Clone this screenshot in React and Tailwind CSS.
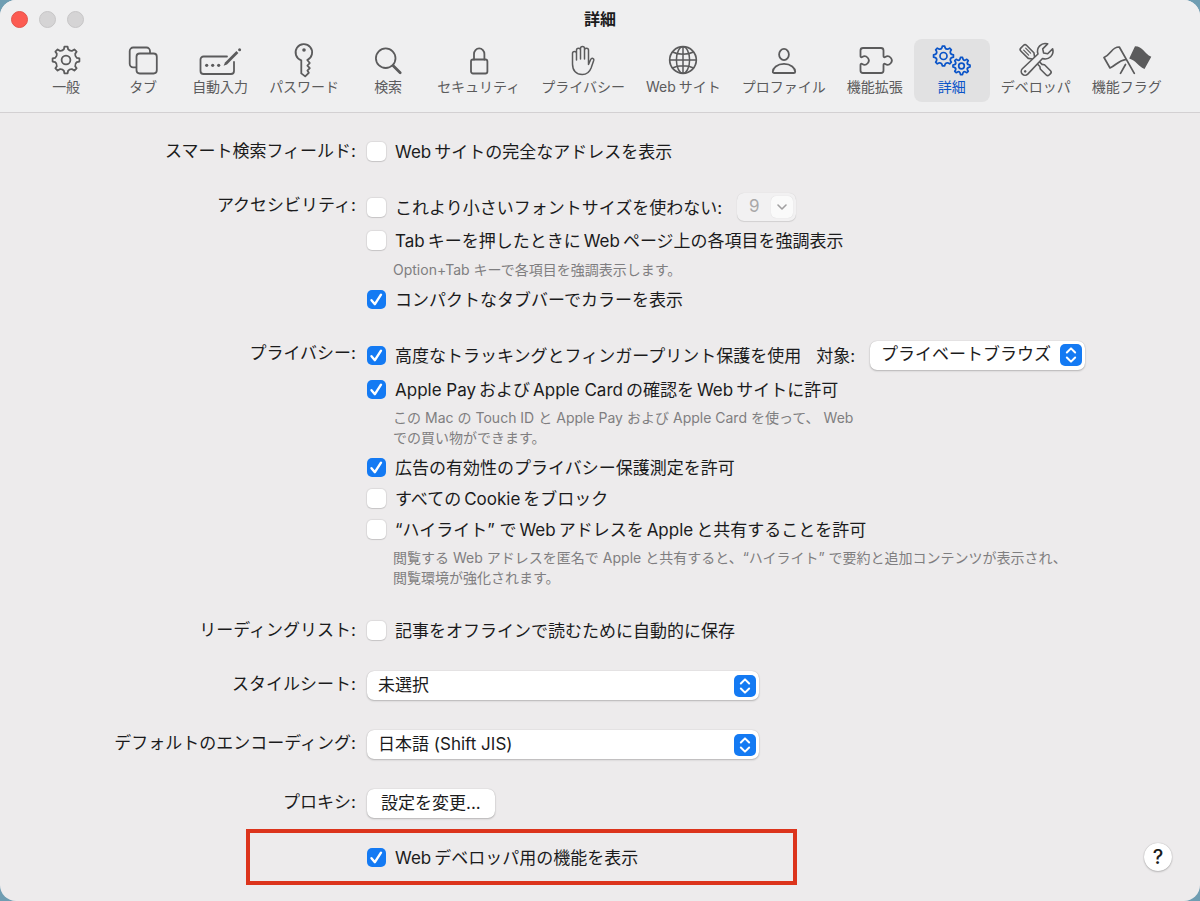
import { ChevronDown, ChevronsUpDown } from "lucide-react";

// outline of a cog with rounded teeth
const gearPath = (cx, cy, outer, inner, teeth = 8) => {
  const step = (Math.PI * 2) / teeth;
  const at = (r, a) => `${(cx + r * Math.sin(a)).toFixed(2)} ${(cy - r * Math.cos(a)).toFixed(2)}`;
  let d = "";
  for (let i = 0; i < teeth; i++) {
    const a = i * step;
    d += `${i ? "L" : "M"}${at(inner + 0.6, a - step * 0.24)} L${at(outer, a - step * 0.15)} L${at(outer, a + step * 0.15)} L${at(inner + 0.6, a + step * 0.24)} Q${at(inner - 1, a + step * 0.5)} ${at(inner + 0.6, a + step * 0.76)} `;
  }
  return d + "Z";
};

function Icon({ w = 32, stroke = 1.8, children }) {
  return (
    <svg width={w} height="32" viewBox={`0 0 ${w} 32`} fill="none" stroke="currentColor" strokeWidth={stroke} strokeLinecap="round" strokeLinejoin="round" className="overflow-visible" aria-hidden="true">
      {children}
    </svg>
  );
}

const tabs = [
  {
    label: "一般",
    icon: <Icon><path d={gearPath(16, 15, 13.5, 10.5)} /><circle cx="16" cy="15" r="4.4" /></Icon>,
  },
  {
    label: "タブ",
    icon: (
      <Icon>
        <path d="M9 22.3H6.2a3.5 3.5 0 0 1-3.5-3.5V6a3.5 3.5 0 0 1 3.5-3.5h13.3A3.5 3.5 0 0 1 23 6v2.2" />
        <rect x="9.5" y="8.5" width="20.3" height="20" rx="3.2" />
      </Icon>
    ),
  },
  {
    label: "自動入力",
    icon: (
      <Icon w={44}>
        <path d="M29 11.5H5.5a3 3 0 0 0-3 3V26a3 3 0 0 0 3 3H33a3 3 0 0 0 3-3V17" />
        <g fill="currentColor" stroke="none">
          <circle cx="8.7" cy="20.3" r="1.6" /><circle cx="14.7" cy="20.3" r="1.6" /><circle cx="20.7" cy="20.3" r="1.6" />
          <path d="M25.6 20.8l1.4-3.4L38.4 6l2 2L29 19.4z" />
          <circle cx="41.6" cy="4.8" r="1.5" />
        </g>
      </Icon>
    ),
  },
  {
    label: "パスワード",
    icon: (
      <Icon w={24}>
        <path d="M9.3 15.3A8.3 8.3 0 1 1 15.2 15l2.6 3-2.4 2.6 2.4 2.6-2.4 2.4 1.4 2.2-3.6 3.6-3.9-3z" />
        <circle cx="12" cy="5" r="1.8" fill="currentColor" stroke="none" />
      </Icon>
    ),
  },
  {
    label: "検索",
    icon: <Icon><circle cx="13.7" cy="13.2" r="9.8" /><path d="M21.2 20.7l7 7" strokeWidth="2.8" /></Icon>,
  },
  {
    label: "セキュリティ",
    icon: <Icon w={24}><rect x="4" y="14.5" width="16.4" height="14" rx="2" /><path d="M7 14.5V9a5.2 5.6 0 0 1 10.4 0v5.5" /></Icon>,
  },
  {
    label: "プライバシー",
    icon: (
      <Icon w={28} stroke={1.5}>
        <path d="M3.5 19V8.5a2 2 0 0 1 4 0V15V5.2a2 2 0 0 1 4 0V14V3.4a2 2 0 0 1 4 0V14V5.2a2 2 0 0 1 4 0V19.5l2.2-5c1-2 3.7-1.2 3 1l-2.6 7.5c-1.6 4.3-4.6 6.5-8.8 6.5-6 0-9.8-3.8-9.8-10.5z" />
      </Icon>
    ),
  },
  {
    label: "Webサイト",
    icon: (
      <Icon stroke={1.5}>
        <circle cx="16" cy="15" r="13.3" strokeWidth="1.7" />
        <ellipse cx="16" cy="15" rx="6.6" ry="13.3" />
        <path d="M16 1.7v26.6M2.7 15h26.6M5.5 7c5.5 3 15.5 3 21 0M5.5 23c5.5-3 15.5-3 21 0" />
      </Icon>
    ),
  },
  {
    label: "プロファイル",
    icon: (
      <Icon w={28}>
        <ellipse cx="14" cy="9.5" rx="4.9" ry="5.6" />
        <path d="M4.3 28c-1 0-1.5-.5-1.5-1.3 0-3.5 4.2-7.9 11.2-7.9s11.2 4.4 11.2 7.9c0 .8-.5 1.3-1.5 1.3z" />
      </Icon>
    ),
  },
  {
    label: "機能拡張",
    icon: (
      <Icon w={36}>
        <path d="M6 3h18a2.5 2.5 0 0 1 2.5 2.5v5.7c0 1 .9 1.3 1.7.8a4.2 4.2 0 1 1 0 7c-.8-.5-1.7-.2-1.7.8v5.7A2.5 2.5 0 0 1 24 28H6a2.5 2.5 0 0 1-2.5-2.5v-5.7c0-1 .9-1.3 1.7-.8a4.2 4.2 0 1 0 0-7c-.8.5-1.7.2-1.7-.8V5.5A2.5 2.5 0 0 1 6 3z" />
      </Icon>
    ),
  },
  {
    label: "詳細",
    active: true,
    icon: (
      <Icon w={40} stroke={1.7}>
        <path d={gearPath(11.5, 11, 10, 7.8)} /><circle cx="11.5" cy="11" r="3.5" />
        <path d={gearPath(29.5, 21, 8.6, 6.6)} /><circle cx="29.5" cy="21" r="2.8" />
      </Icon>
    ),
  },
  {
    label: "デベロッパ",
    icon: (
      <Icon w={36} stroke={1.6}>
        <g transform="translate(18 15.5) rotate(-45)">
          <path d="M-4-17.5a2 2 0 0 1 2-2h4a2 2 0 0 1 2 2V-7L1.5-3.5V7l1.5 2v8.5a2 2 0 0 1-2 2h-2a2 2 0 0 1-2-2V9l1.5-2V-3.5L-4-7z" />
          <path d="M-1.4-16v7M1.4-16v7" strokeWidth="1.2" />
        </g>
        <g transform="translate(18 15.5) rotate(45)">
          <path d="M-3.2-6c-6-3-6-11-.3-14v7L0-10.7 3.5-13v-7c5.7 3 5.7 11-.3 14L3.8 15.5a3.8 3.8 0 0 1-7.6 0z" fill="#efeff0" />
          <circle cx="0" cy="15.3" r="1.3" fill="currentColor" stroke="none" />
        </g>
      </Icon>
    ),
  },
  {
    label: "機能フラグ",
    icon: (
      <Icon w={52} stroke={1.7}>
        <path d="M33.3 28.3L18.3 2C11 1.5 11 8.5 3 12.5L9 23c6-2.5 8-7.5 16-8.5M24.5 19.5l-5 8.8" />
        <path d="M34 1.2c8 0 9 7.3 16.3 10.5L43.5 24C36.5 20.5 35 15.5 28.2 13.5z" fill="currentColor" stroke="none" />
      </Icon>
    ),
  },
];

// Latin words get a little air where they touch Japanese text
function Mixed({ text, gap = "mx-[3px]", endGap = "mr-[3px]" }) {
  const parts = text.split(/([A-Za-z+]+(?: [A-Za-z]+)*)/);
  return parts.map((part, i) => {
    if (i % 2 === 0) return part;
    return <span key={i} className={parts[i - 1] ? gap : endGap}>{part}</span>;
  });
}

function Check({ checked, className = "", text }) {
  return (
    <label className={`flex h-[30px] items-center gap-[9px] whitespace-nowrap ${className}`}>
      <span className="grid shrink-0 place-items-center">
        <input type="checkbox" defaultChecked={checked} className="peer col-start-1 row-start-1 size-[19px] appearance-none rounded-[5px] bg-white shadow-[0_0_1px_1px_rgba(0,0,0,0.07),0_1px_1px_rgba(0,0,0,0.1)] checked:bg-[#147af3] checked:shadow-none" />
        <svg viewBox="0 0 19 19" fill="none" stroke="white" strokeWidth="2.4" strokeLinecap="round" strokeLinejoin="round" className="pointer-events-none col-start-1 row-start-1 hidden size-[19px] peer-checked:block">
          <path d="M4.5 10.2l3.4 4L14 4.7" />
        </svg>
      </span>
      <span className="pt-[3px]"><Mixed text={text} /></span>
    </label>
  );
}

function Popup({ id, options, className }) {
  return (
    <div className={`grid max-w-full items-center ${className}`}>
      <select id={id} className="col-start-1 row-start-1 h-[29px] w-full appearance-none rounded-[7px] bg-white pr-8 pl-[11px] shadow-[0_0_1px_rgba(0,0,0,0.25),0_1px_2px_rgba(0,0,0,0.22)]">
        {options.map((o) => <option key={o}>{o}</option>)}
      </select>
      <span className="pointer-events-none col-start-1 row-start-1 mr-[3px] flex size-[22px] items-center justify-center justify-self-end rounded-[5px] bg-[#147af3] text-white">
        <ChevronsUpDown size={20} strokeWidth={2.4} />
      </span>
    </div>
  );
}

function Hint({ lines, className = "mt-1" }) {
  return (
    <p className={`pl-[26px] text-sm leading-5 whitespace-nowrap text-[#7f7e80] ${className}`}>
      {lines.map((line) => <span key={line} className="block"><Mixed text={line} gap="mx-1" endGap="mr-1" /></span>)}
    </p>
  );
}

function Section({ label, htmlFor, labelClass = "leading-[27px]", className = "", children }) {
  const Label = htmlFor ? "label" : "div";
  return (
    <div className={`grid grid-cols-[30%_1fr] ${className}`}>
      <Label htmlFor={htmlFor} className={`pr-1 text-right whitespace-nowrap ${labelClass}`}>{label}</Label>
      <div className="min-w-0 pl-[7px]">{children}</div>
    </div>
  );
}

export default function App() {
  return (
    <div className="min-h-screen bg-[#6f9db2]">
      <div className="min-h-screen overflow-hidden rounded-2xl bg-[#edebec] font-[Inter,'Noto_Sans_CJK_JP',sans-serif] text-[17px] text-[#1b1b1c]">
        <header className="border-b border-[#d3d0d2] bg-[#efeff0] pb-[10px]">
          <div className="grid h-[39px] grid-cols-3 items-center px-[11px]">
            <div className="flex gap-[11px]">
              <button aria-label="閉じる" className="size-[17px] rounded-full border border-[#e2544b] bg-[#fc5b52]" />
              <button aria-label="しまう" className="size-[17px] rounded-full border border-[#c6c5c6] bg-[#d5d4d5]" />
              <button aria-label="拡大" className="size-[17px] rounded-full border border-[#c6c5c6] bg-[#d5d4d5]" />
            </div>
            <h1 className="pb-[2px] text-center text-base font-bold">詳細</h1>
          </div>
          <nav className="flex justify-center gap-px">
            {tabs.map((t) => (
              <button key={t.label} className={`flex min-w-[76px] flex-col items-center rounded-lg px-[10px] pt-[6px] pb-[5px] text-sm leading-5 whitespace-nowrap ${t.active ? "bg-[#e1e1e2] text-[#0a54c8]" : "text-[#5b5b5c]"}`}>
                {t.icon}
                <span><Mixed text={t.label} /></span>
              </button>
            ))}
          </nav>
        </header>

        <main className="pt-[23px] pb-4">
          <Section label="スマート検索フィールド:" labelClass="leading-[30px]">
            <Check text="Webサイトの完全なアドレスを表示" />
          </Section>

          <Section label="アクセシビリティ:" className="mt-[26px]">
            <div className="flex items-center gap-[15px]">
              <Check text="これより小さいフォントサイズを使わない:" />
              <div className="grid items-center">
                <select disabled aria-label="最小フォントサイズ" className="col-start-1 row-start-1 h-[28px] w-[59px] appearance-none rounded-[7px] bg-[#f2f1f2] pl-3 text-[#a9a8a9] opacity-100 shadow-[0_0_1px_rgba(0,0,0,0.15),0_1px_1px_rgba(0,0,0,0.1)]">
                  <option>9</option>
                </select>
                <span className="pointer-events-none col-start-1 row-start-1 mr-[3px] flex size-[22px] items-center justify-center justify-self-end rounded-[5px] bg-[#fafafa] text-[#a09fa0] shadow-[0_0_1px_rgba(0,0,0,0.15)]">
                  <ChevronDown size={16} strokeWidth={2.4} />
                </span>
              </div>
            </div>
            <Check className="mt-[3px]" text="Tabキーを押したときにWebページ上の各項目を強調表示" />
            <Hint className="mt-[5px]" lines={["Option+Tabキーで各項目を強調表示します。"]} />
            <Check checked className="mt-1" text="コンパクトなタブバーでカラーを表示" />
          </Section>

          <Section label="プライバシー:" className="mt-[26px]">
            <div className="flex items-center gap-[15px]">
              <Check checked text="高度なトラッキングとフィンガープリント保護を使用" />
              <label htmlFor="tracking" className="pt-[3px] whitespace-nowrap">対象:</label>
              <Popup id="tracking" options={["プライベートブラウズ", "すべてのブラウズ"]} className="w-[215px]" />
            </div>
            <Check checked className="mt-1" text="Apple PayおよびApple Cardの確認をWebサイトに許可" />
            <Hint lines={["このMacのTouch IDとApple PayおよびApple Cardを使って、Web", "での買い物ができます。"]} />
            <Check checked className="mt-1" text="広告の有効性のプライバシー保護測定を許可" />
            <Check className="mt-px" text="すべてのCookieをブロック" />
            <Check className="mt-px" text="“ハイライト” でWebアドレスをAppleと共有することを許可" />
            <Hint lines={["閲覧するWebアドレスを匿名でAppleと共有すると、“ハイライト” で要約と追加コンテンツが表示され、", "閲覧環境が強化されます。"]} />
          </Section>

          <Section label="リーディングリスト:" labelClass="leading-[30px]" className="mt-[27px]">
            <Check text="記事をオフラインで読むために自動的に保存" />
          </Section>

          <Section label="スタイルシート:" htmlFor="stylesheet" className="mt-[26px]">
            <Popup id="stylesheet" options={["未選択", "その他..."]} className="w-[392px]" />
          </Section>

          <Section label="デフォルトのエンコーディング:" htmlFor="encoding" className="mt-[30px]">
            <Popup id="encoding" options={["日本語 (Shift JIS)", "Unicode (UTF-8)"]} className="w-[392px]" />
          </Section>

          <Section label="プロキシ:" className="mt-[30px]">
            <button className="block h-[29px] rounded-[7px] bg-white px-[14px] shadow-[0_0_1px_rgba(0,0,0,0.25),0_1px_2px_rgba(0,0,0,0.22)]">設定を変更...</button>
          </Section>

          <Section className="mt-[11px]">
            <div className="relative flex h-14 items-center justify-between pr-7">
              <Check checked text="Webデベロッパ用の機能を表示" />
              <div className="pointer-events-none absolute inset-y-0 -left-[121px] w-[551px] border-4 border-[#dc341c]" />
              <button aria-label="ヘルプ" className="size-7 rounded-full bg-white text-xl leading-7 font-medium shadow-[0_0_1px_rgba(0,0,0,0.3),0_1px_2px_rgba(0,0,0,0.2)]">?</button>
            </div>
          </Section>
        </main>
      </div>
    </div>
  );
}
